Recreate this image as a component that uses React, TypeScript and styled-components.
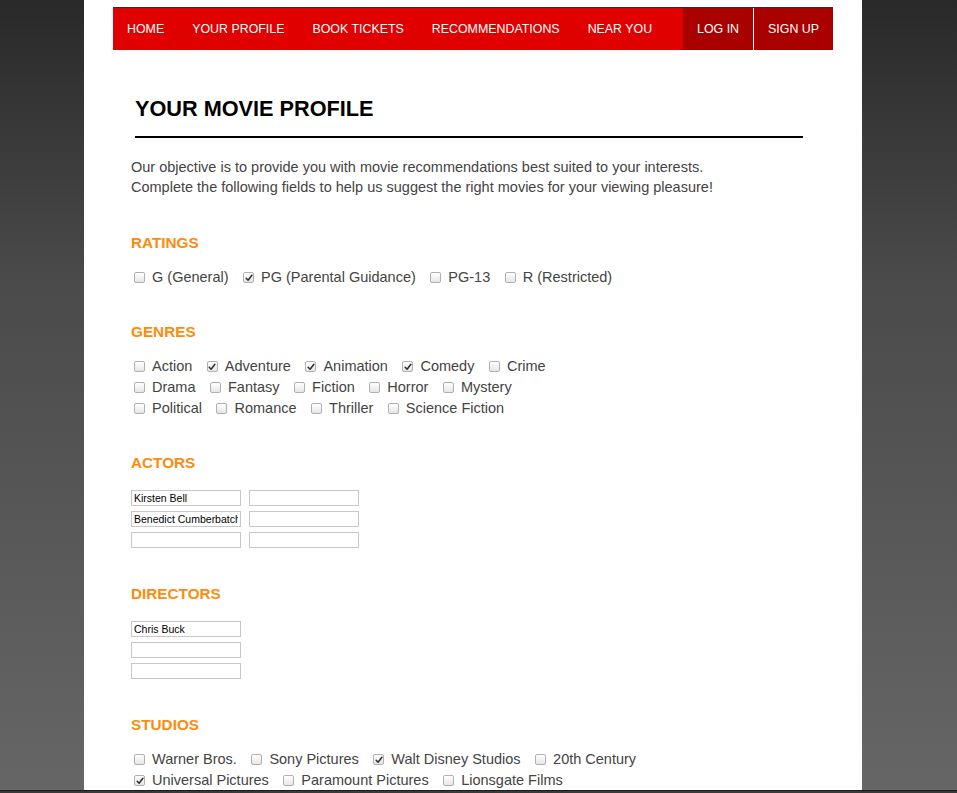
import React from "react";
import styled, { createGlobalStyle } from "styled-components";

const GlobalStyle = createGlobalStyle`
  html, body {
    margin: 0;
    padding: 0;
  }
  body {
    min-height: 100vh;
    padding-right: 11px;
    background: linear-gradient(to bottom, #292929 0%, #4a4a4a 35%, #666666 100%) fixed;
    font-family: "Liberation Sans", Arial, Helvetica, sans-serif;
  }
`;

// Layout
const Page = styled.div`
  width: 778px;
  min-height: 100vh;
  margin: 0 auto;
  padding: 7px 29px 40px;
  box-sizing: border-box;
  background: #ffffff;
`;

const WindowEdge = styled.div`
  position: fixed;
  left: 0;
  right: 0;
  bottom: 0;
  height: 2px;
  border-top: 1px solid #1c1c1c;
  background: #3a3a3a;
`;

// Navigation
const Nav = styled.nav`
  display: flex;
  height: 42px;
  border-top: 1px solid #1d2f5e;
  background: #e10000;
`;

const NavItem = styled.a<{ $account?: boolean; $push?: boolean; $divider?: boolean }>`
  display: block;
  padding: 0 14px;
  line-height: 42px;
  font-size: 12.4px;
  color: #ffffff;
  text-decoration: none;
  background: ${(p) => (p.$account ? "#a90000" : "transparent")};
  margin-left: ${(p) => (p.$push ? "auto" : "0")};
  border-left: ${(p) => (p.$divider ? "1px solid #ffffff" : "0")};
`;

// Content
const Content = styled.main`
  padding-left: 18px;
`;

const Title = styled.h1`
  margin: 46px 0 0 4px;
  font-size: 21.7px;
  line-height: 26px;
  font-weight: bold;
  color: #000000;
`;

const Rule = styled.hr`
  width: 668px;
  height: 2px;
  margin: 14px 0 0 4px;
  border: none;
  background: #000000;
`;

const Intro = styled.p`
  margin: 19px 0 0;
  font-size: 14.5px;
  line-height: 20px;
  color: #444444;
`;

const Section = styled.section<{ $first?: boolean }>`
  margin-top: ${(p) => (p.$first ? "37px" : "35.5px")};
`;

const SectionTitle = styled.h3`
  margin: 0 0 14.5px;
  font-size: 15.3px;
  line-height: 18px;
  font-weight: bold;
  color: #fd8c0c;
`;

const OptionRow = styled.div`
  display: flex;
  height: 21px;
`;

const Option = styled.label`
  display: flex;
  align-items: center;
  gap: 7px;
  padding-left: 3px;
  margin-right: 11.5px;
  font-size: 14.5px;
  line-height: 21px;
  color: #444444;
  white-space: nowrap;
`;

const Box = styled.span`
  display: flex;
  align-items: center;
  justify-content: center;
  width: 9px;
  height: 9px;
  border: 1px solid #b0b0b0;
  border-radius: 2px;
  background: linear-gradient(to bottom, #ffffff, #e6e6e6);
  box-shadow: inset 0 1px 0 #ffffff;
  margin-top: 1px;
`;

const HiddenInput = styled.input`
  display: none;
`;

const FieldGrid = styled.div<{ $cols: number }>`
  display: grid;
  grid-template-columns: repeat(${(p) => p.$cols}, 110px);
  column-gap: 8px;
  row-gap: 5px;
  padding: 3px 0 2px;
`;

const TextField = styled.input`
  width: 110px;
  height: 16px;
  box-sizing: border-box;
  padding: 1px 2px 0;
  border: 1px solid #c8c8c8;
  font-family: "Liberation Sans", Arial, Helvetica, sans-serif;
  font-size: 10.5px;
  color: #000000;
  background: #ffffff;
  outline: none;
`;

type Choice = { label: string; checked?: boolean };

const Checkbox = ({ label, checked }: Choice) => (
  <Option>
    <HiddenInput type="checkbox" defaultChecked={checked} />
    <Box>
      {checked && (
        <svg width="8" height="8" viewBox="0 0 8 8">
          <path
            d="M1.2 4.2 L3.1 6.2 L6.9 1.3"
            fill="none"
            stroke="#2e2e2e"
            strokeWidth="1.5"
            strokeLinecap="round"
            strokeLinejoin="round"
          />
        </svg>
      )}
    </Box>
    {label}
  </Option>
);

const CheckGroup = ({ rows }: { rows: Choice[][] }) => (
  <div>
    {rows.map((row, i) => (
      <OptionRow key={i}>
        {row.map((c) => (
          <Checkbox key={c.label} {...c} />
        ))}
      </OptionRow>
    ))}
  </div>
);

const ratings: Choice[][] = [
  [
    { label: "G (General)" },
    { label: "PG (Parental Guidance)", checked: true },
    { label: "PG-13" },
    { label: "R (Restricted)" },
  ],
];

const genres: Choice[][] = [
  [
    { label: "Action" },
    { label: "Adventure", checked: true },
    { label: "Animation", checked: true },
    { label: "Comedy", checked: true },
    { label: "Crime" },
  ],
  [
    { label: "Drama" },
    { label: "Fantasy" },
    { label: "Fiction" },
    { label: "Horror" },
    { label: "Mystery" },
  ],
  [
    { label: "Political" },
    { label: "Romance" },
    { label: "Thriller" },
    { label: "Science Fiction" },
  ],
];

const studios: Choice[][] = [
  [
    { label: "Warner Bros." },
    { label: "Sony Pictures" },
    { label: "Walt Disney Studios", checked: true },
    { label: "20th Century" },
  ],
  [
    { label: "Universal Pictures", checked: true },
    { label: "Paramount Pictures" },
    { label: "Lionsgate Films" },
  ],
];

const actors = ["Kirsten Bell", "", "Benedict Cumberbatch", "", "", ""];
const directors = ["Chris Buck", "", ""];

export default function App() {
  return (
    <>
      <GlobalStyle />
      <Page>
        <Nav>
          <NavItem href="#">HOME</NavItem>
          <NavItem href="#">YOUR PROFILE</NavItem>
          <NavItem href="#">BOOK TICKETS</NavItem>
          <NavItem href="#">RECOMMENDATIONS</NavItem>
          <NavItem href="#">NEAR YOU</NavItem>
          <NavItem href="#" $account $push>
            LOG IN
          </NavItem>
          <NavItem href="#" $account $divider>
            SIGN UP
          </NavItem>
        </Nav>

        <Content>
          <Title>YOUR MOVIE PROFILE</Title>
          <Rule />
          <Intro>
            Our objective is to provide you with movie recommendations best suited to your interests.
            <br />
            Complete the following fields to help us suggest the right movies for your viewing pleasure!
          </Intro>

          <Section $first>
            <SectionTitle>RATINGS</SectionTitle>
            <CheckGroup rows={ratings} />
          </Section>

          <Section>
            <SectionTitle>GENRES</SectionTitle>
            <CheckGroup rows={genres} />
          </Section>

          <Section>
            <SectionTitle>ACTORS</SectionTitle>
            <FieldGrid $cols={2}>
              {actors.map((a, i) => (
                <TextField key={i} type="text" defaultValue={a} />
              ))}
            </FieldGrid>
          </Section>

          <Section>
            <SectionTitle>DIRECTORS</SectionTitle>
            <FieldGrid $cols={1}>
              {directors.map((d, i) => (
                <TextField key={i} type="text" defaultValue={d} />
              ))}
            </FieldGrid>
          </Section>

          <Section>
            <SectionTitle>STUDIOS</SectionTitle>
            <CheckGroup rows={studios} />
          </Section>
        </Content>
      </Page>
      <WindowEdge />
    </>
  );
}
